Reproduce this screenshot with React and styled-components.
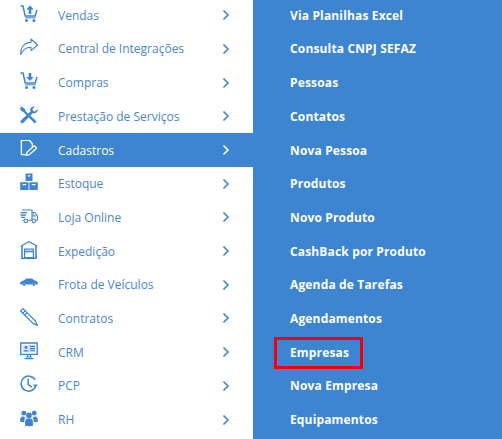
import React from "react";
import styled, { createGlobalStyle } from "styled-components";

const Global = createGlobalStyle`
  html, body { margin: 0; padding: 0; background: #fff; overflow: hidden; }
  body { font-family: "Open Sans", "Liberation Sans", sans-serif; }
`;

const Page = styled.div`
  display: flex;
  width: 502px;
  height: 439px;
  overflow: hidden;
`;

const Sidebar = styled.ul`
  list-style: none;
  width: 253px;
  margin: -1.6px 0 0;
  padding: 0;
  flex: none;
`;

const Row = styled.li`
  display: flex;
  align-items: center;
  height: 33.7px;
  padding: 0 20px;
  box-sizing: border-box;
  color: ${(p) => (p.$active ? "#fff" : "#4a86d0")};
  background: ${(p) => (p.$active ? "#3e85d1" : "transparent")};
`;

const IconSlot = styled.span`
  display: flex;
  width: 38px;
  flex: none;
  margin-bottom: 3px;
  color: ${(p) => (p.$active ? "#fff" : "#3e85d1")};
  svg { display: block; width: 18px; height: 18px; }
`;

const Label = styled.span`
  flex: 1;
  font-size: 12px;
  white-space: nowrap;
`;

const Chevron = styled.svg`
  width: 8px;
  height: 12px;
  margin-right: 3px;
  fill: none;
  stroke: currentColor;
  stroke-width: 1.6;
  color: ${(p) => (p.$active ? "#fff" : "#3e85d1")};
`;

const Panel = styled.div`
  flex: 1;
  padding-left: 37px;
  background: #3e85d1;
`;

const PanelList = styled.ul`
  list-style: none;
  margin: -1.6px 0 0;
  padding: 0;
`;

const PanelItem = styled.li`
  display: flex;
  align-items: center;
  height: 33.7px;
  position: relative;
  color: #fff;
  font-size: 12px;
  font-weight: 700;
  letter-spacing: 0.15px;
  white-space: nowrap;
`;

const Highlight = styled.span`
  position: absolute;
  left: -16px;
  top: 2px;
  width: 89px;
  height: 32px;
  box-sizing: border-box;
  border: 3px solid #f4000a;
  border-radius: 1px;
`;

const Cart = ({ down }) => (
  <svg viewBox="0 0 18 18" fill="none" stroke="currentColor">
    <path d="M0.5 1H3L5.2 11H15.2L17 5" strokeWidth="1.5" />
    <path d="M5.2 12.8H15.5" strokeWidth="1.1" />
    <circle cx="6.5" cy="15.6" r="1.5" fill="currentColor" stroke="none" />
    <circle cx="14" cy="15.6" r="1.5" fill="currentColor" stroke="none" />
    {down ? (
      <path d="M8.7 1H11.3V5H13.7L10 9L6.3 5H8.7Z" fill="currentColor" stroke="none" />
    ) : (
      <path d="M8.7 9H11.3V4.6H13.7L10 0.6L6.3 4.6H8.7Z" fill="currentColor" stroke="none" />
    )}
  </svg>
);

const Share = () => (
  <svg viewBox="0 0 18 18" fill="none" stroke="currentColor" strokeWidth="1.1" strokeLinejoin="round">
    <path d="M11 1L17.6 7L11 12.6V9.2C6.5 9 3.2 10.8 0.8 16.4C0 9.6 4 4.8 11 4.4Z" />
  </svg>
);

const Tools = () => (
  <svg viewBox="0 0 18 18" fill="currentColor">
    <path d="M1.6 0.4L5 3.2L5.4 5L16.4 15.2L14.8 17.4L3.4 6L1 4.8L0 2Z" />
    <path d="M17.6 3.2L15 5.6L13 5L12.5 2.9L14.8 0.5C12.4 0 10.2 1.4 10.2 4C10.2 4.6 10.3 5 10.5 5.4L0.8 14.6C-0.3 16 1.6 18.2 3.2 17L12.6 7.3C15.2 8 18.4 6.2 17.6 3.2Z" />
  </svg>
);

const DocEdit = () => (
  <svg viewBox="0 0 18 18" fill="none" stroke="currentColor" strokeWidth="1.4" strokeLinejoin="round">
    <path d="M5.5 14.6H1.4V0.4H9.4L12.4 4V7" />
    <path d="M6.2 15.4L7 12.2L13.4 6.6C14.8 5.4 17.2 7.6 15.8 9L9.4 14.6Z" strokeWidth="1.3" />
  </svg>
);

const Boxes = () => (
  <svg viewBox="0 0 18 18" fill="currentColor">
    <path d="M5.5 0.5H12.5V8H5.5ZM7.8 2.2V3.4H10.2V2.2Z" fillRule="evenodd" />
    <path d="M0.2 9.2H8.6V17H0.2ZM2.6 11V12.2H6V11Z" fillRule="evenodd" />
    <path d="M9.4 9.2H17.8V17H9.4ZM11.8 11V12.2H15.4V11Z" fillRule="evenodd" />
  </svg>
);

const Truck = () => (
  <svg viewBox="0 0 18 18" fill="none" stroke="currentColor" strokeWidth="1.1">
    <path d="M2 3H12V13.2H8" />
    <path d="M12 5.5H15L17.4 9.2V13.2H16" />
    <path d="M3.6 13.2H2.5" />
    <path d="M0.5 5.6H7M0.5 8H6M1 10.4H5" strokeWidth="1.3" />
    <circle cx="5.8" cy="13.8" r="1.8" />
    <circle cx="13.8" cy="13.8" r="1.8" />
    <path d="M13.2 6.6V9H16" />
  </svg>
);

const Warehouse = () => (
  <svg viewBox="0 0 18 18" fill="none" stroke="currentColor">
    <path d="M0.6 5.2L9 0.8L17.4 5.2" strokeWidth="1.2" />
    <path d="M2 5V17.4H16V5" strokeWidth="1.6" />
    <path d="M4.6 8.2H13.4V16.6H4.6Z" strokeWidth="1.2" />
    <path d="M4.6 10.5H13.4" strokeWidth="1.6" />
  </svg>
);

const Car = () => (
  <svg viewBox="0 0 18 18" fill="currentColor">
    <path d="M0.2 9.2C0.4 7.6 2.2 7 4 6.6L6.2 4.4H12L14.6 6.6C16 6.9 17.8 7.4 17.8 9.2V10.6H15.4C15 9 12.8 9 12.4 10.6H5.6C5.2 9 3 9 2.6 10.6H0.2Z" />
    <circle cx="4.1" cy="10.8" r="1.2" />
    <circle cx="13.9" cy="10.8" r="1.2" />
  </svg>
);

const Pen = () => (
  <svg viewBox="0 0 18 18" fill="none" stroke="currentColor" strokeWidth="1.2" strokeLinejoin="round">
    <path d="M0.6 3L3 0.6L15.4 13L17.4 17.4L13 15.4Z" />
    <path d="M2.6 5.4L5.4 2.6M4.6 7.2L7.2 4.6" />
  </svg>
);

const Monitor = () => (
  <svg viewBox="0 0 18 18" fill="none" stroke="currentColor">
    <path d="M0.8 1H17.2V12.4H0.8Z" strokeWidth="1.4" />
    <path d="M3 3H15.2V10.4H3Z" fill="currentColor" stroke="none" opacity="0.25" />
    <circle cx="6" cy="5.4" r="1.4" fill="currentColor" stroke="none" />
    <path d="M3.6 9.6C3.6 7.6 8.4 7.6 8.4 9.6Z" fill="currentColor" stroke="none" />
    <path d="M10 4.4H15M10 6.6H15M10 8.8H15" strokeWidth="1.1" />
    <path d="M6 15H12M7.6 12.6V15M10.4 12.6V15M4.6 16.6H13.4" strokeWidth="1.2" />
  </svg>
);

const Clock = () => (
  <svg viewBox="0 0 18 18" fill="none" stroke="currentColor" strokeWidth="1.5">
    <path d="M15.9 10.5A7.5 7.5 0 1 1 15.2 5" />
    <path d="M8.2 3.8V9.6L12 12.2" />
    <path d="M13 9.4H17.8L15.4 12.6Z" fill="currentColor" stroke="none" />
  </svg>
);

const Users = () => (
  <svg viewBox="0 0 18 18" fill="currentColor">
    <circle cx="3.8" cy="4.2" r="2.4" />
    <circle cx="14.2" cy="4.2" r="2.4" />
    <circle cx="9" cy="6.4" r="2.8" />
    <path d="M0 12C0 8.4 1.4 7.2 3.8 7.4L5.2 8.4C4.6 9.6 4.4 11 4.2 13H1Z" />
    <path d="M18 12C18 8.4 16.6 7.2 14.2 7.4L12.8 8.4C13.4 9.6 13.6 11 13.8 13H17Z" />
    <path d="M5 16.6C4.8 12 5.6 9.6 7.4 9.6H10.6C12.4 9.6 13.2 12 13 16.6C11 17.6 7 17.6 5 16.6Z" />
  </svg>
);

const menu = [
  { label: "Vendas", icon: <Cart /> },
  { label: "Central de Integrações", icon: <Share /> },
  { label: "Compras", icon: <Cart down /> },
  { label: "Prestação de Serviços", icon: <Tools /> },
  { label: "Cadastros", icon: <DocEdit />, active: true },
  { label: "Estoque", icon: <Boxes /> },
  { label: "Loja Online", icon: <Truck /> },
  { label: "Expedição", icon: <Warehouse /> },
  { label: "Frota de Veículos", icon: <Car /> },
  { label: "Contratos", icon: <Pen /> },
  { label: "CRM", icon: <Monitor /> },
  { label: "PCP", icon: <Clock /> },
  { label: "RH", icon: <Users /> },
];

const sub = [
  "Via Planilhas Excel",
  "Consulta CNPJ SEFAZ",
  "Pessoas",
  "Contatos",
  "Nova Pessoa",
  "Produtos",
  "Novo Produto",
  "CashBack por Produto",
  "Agenda de Tarefas",
  "Agendamentos",
  "Empresas",
  "Nova Empresa",
  "Equipamentos",
];

export default function App() {
  return (
    <Page>
      <Global />
      <Sidebar>
        {menu.map((m) => (
          <Row key={m.label} $active={m.active}>
            <IconSlot $active={m.active}>{m.icon}</IconSlot>
            <Label>{m.label}</Label>
            <Chevron viewBox="0 0 8 12" $active={m.active}>
              <path d="M1.5 1.5L6 6L1.5 10.5" />
            </Chevron>
          </Row>
        ))}
      </Sidebar>
      <Panel>
        <PanelList>
          {sub.map((s) => (
            <PanelItem key={s}>
              {s}
              {s === "Empresas" && <Highlight />}
            </PanelItem>
          ))}
        </PanelList>
      </Panel>
    </Page>
  );
}
